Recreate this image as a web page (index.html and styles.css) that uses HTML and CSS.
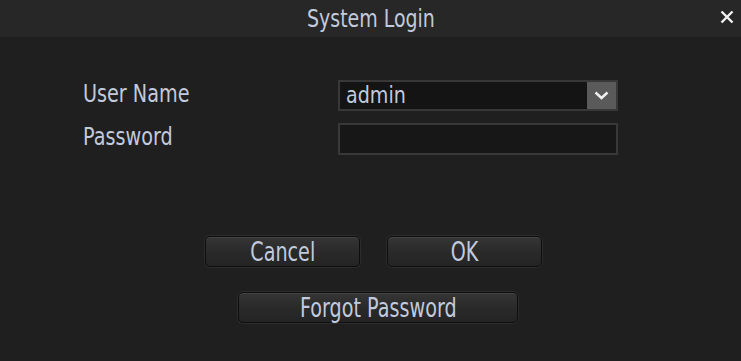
FILE: index.html
```html
<!DOCTYPE html>
<html lang="en">
<head>
    <meta charset="UTF-8">
    <title>System Login</title>
    <link rel="stylesheet" href="styles.css">
</head>
<body>
    <div class="dialog">
        <div class="title-bar">
            <div class="title"><span class="narrow">System Login</span></div>
            <div class="close-btn">
                <svg width="14" height="14" viewBox="0 0 14 14">
                    <path d="M1.5 1.5 L12.5 12.5 M12.5 1.5 L1.5 12.5" stroke="#f2f2f2" stroke-width="2.4"/>
                </svg>
            </div>
        </div>

        <div class="content">
            <div class="form-row">
                <div class="label"><span class="narrow">User Name</span></div>
                <div class="select-box">
                    <div class="select-value"><span class="narrow">admin</span></div>
                    <div class="select-arrow">
                        <svg width="15" height="9" viewBox="0 0 15 9">
                            <polyline points="1.5,1.5 7.5,7 13.5,1.5" fill="none" stroke="#f0f0f0" stroke-width="2.4"/>
                        </svg>
                    </div>
                </div>
            </div>
            <div class="form-row">
                <div class="label"><span class="narrow">Password</span></div>
                <div class="text-input"></div>
            </div>

            <div class="action-buttons">
                <div class="button-row">
                    <button class="btn"><span class="narrow">Cancel</span></button>
                    <button class="btn"><span class="narrow">OK</span></button>
                </div>
                <button class="btn wide"><span class="narrow">Forgot Password</span></button>
            </div>
        </div>
    </div>
</body>
</html>
```

FILE: styles.css
```css
* {
    margin: 0;
    padding: 0;
    box-sizing: border-box;
}

body {
    background-color: #1f1f1f;
    font-family: "DejaVu Sans", sans-serif;
    color: #c2cadd;
    width: 741px;
    height: 361px;
    overflow: hidden;
}

/* the device UI uses a condensed face; squeeze DejaVu to match */
.narrow {
    display: inline-block;
    white-space: nowrap;
    transform: scale(0.79, 1);
}

.dialog {
    width: 741px;
    height: 361px;
    background-color: #1f1f1f;
}

.title-bar {
    height: 37px;
    background-color: #272727;
    display: flex;
    align-items: center;
    justify-content: center;
    position: relative;
}

.title {
    font-size: 24px;
    line-height: 30px;
}

.close-btn {
    position: absolute;
    right: 7px;
    top: 10px;
    display: flex;
}

.content {
    padding: 43px 0 0 83px;
}

.form-row {
    display: flex;
    align-items: center;
    height: 31px;
    margin-bottom: 12px;
}

.label {
    width: 255px;
    font-size: 24px;
    padding-bottom: 3px;
}

.label .narrow {
    transform-origin: 0 50%;
    transform: scale(0.8, 1);
}

.select-box {
    width: 280px;
    height: 31px;
    border: 2px solid #383838;
    background-color: #141414;
    display: flex;
}

.select-value {
    flex: 1;
    font-size: 23px;
    line-height: 27px;
    padding-left: 6px;
}

.select-value .narrow {
    transform-origin: 0 50%;
    transform: scale(0.83, 1);
}

.select-arrow {
    width: 29px;
    background-color: #5a5a5a;
    display: flex;
    align-items: center;
    justify-content: center;
}

.text-input {
    width: 280px;
    height: 32px;
    border: 2px solid #383838;
    background-color: #171717;
}

.action-buttons {
    margin-left: -83px;
    margin-top: 82px;
    display: flex;
    flex-direction: column;
    align-items: center;
    gap: 25px;
}

.button-row {
    display: flex;
    gap: 27px;
    margin-left: 6px;
}

.btn {
    width: 155px;
    height: 31px;
    border: 1px solid #0e0e0e;
    border-radius: 5px;
    background: linear-gradient(#353535, #2a2a2a 50%, #242424);
    box-shadow: inset 0 1px 0 #444, 0 0 0 1px #2c2c2c;
    font-family: "DejaVu Sans", sans-serif;
    font-size: 27px;
    color: #c2cadd;
    line-height: 28px;
}

.btn .narrow {
    transform: scale(0.71, 1);
}

.btn.wide {
    width: 280px;
    margin-left: 15px;
}
```
